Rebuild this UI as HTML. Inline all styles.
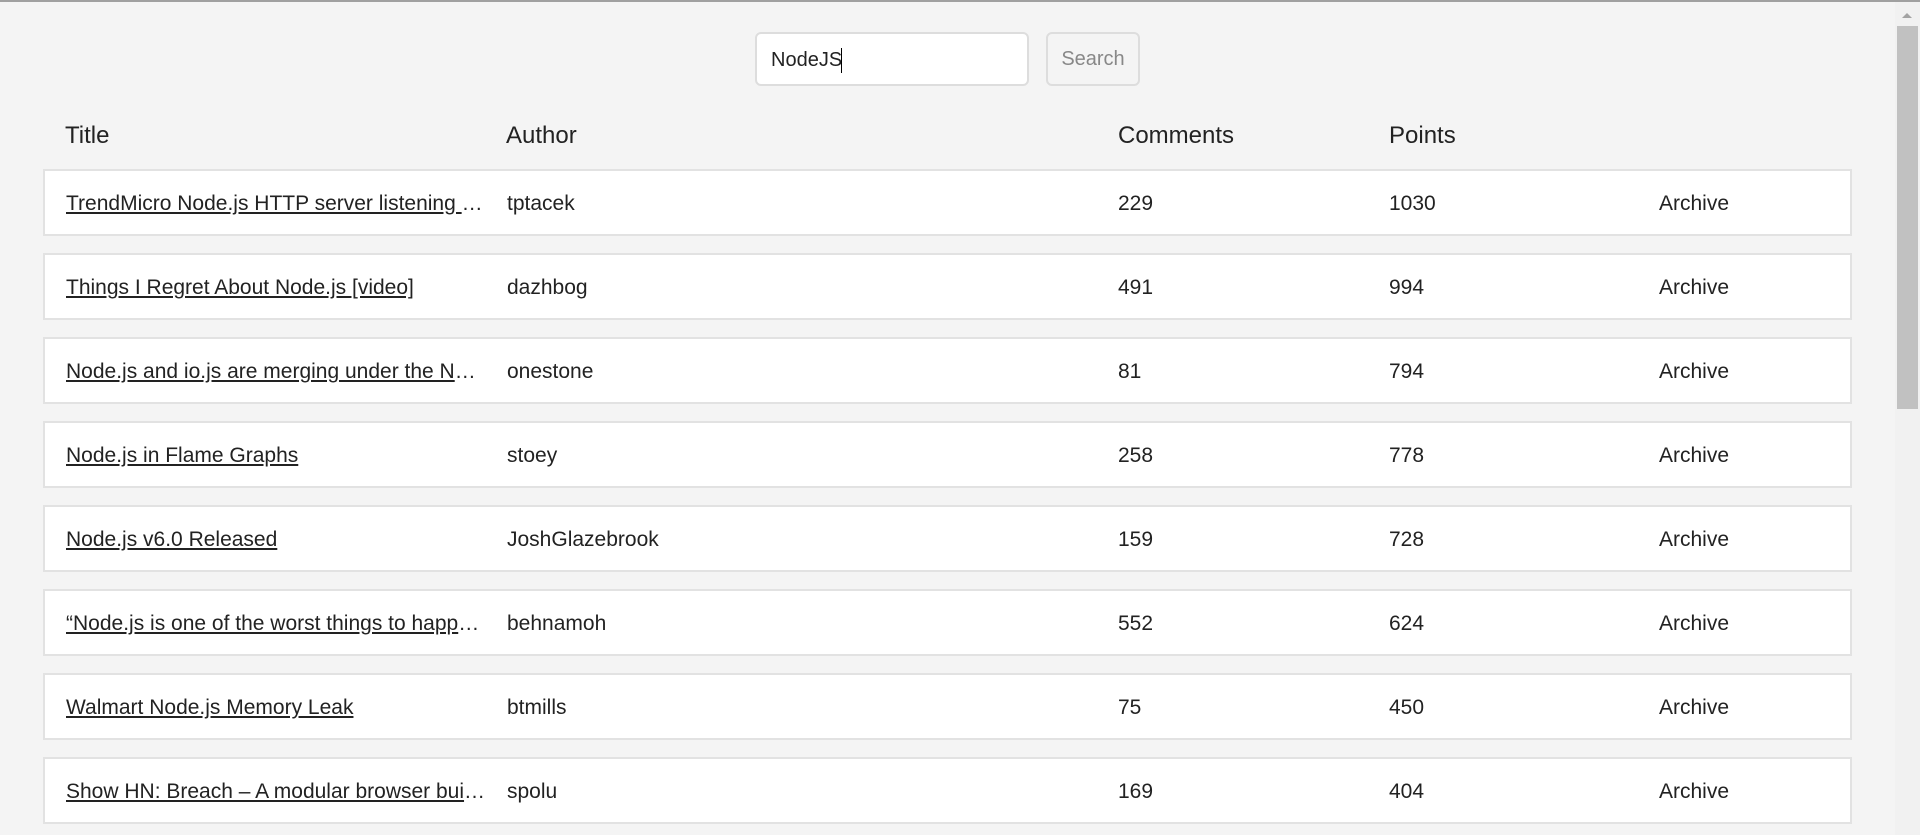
<!DOCTYPE html>
<html><head><meta charset="utf-8"><style>
html,body{margin:0;padding:0;}
body{width:1920px;height:835px;overflow:hidden;background:#f4f4f4;font-family:"Liberation Sans",Arial,sans-serif;color:#222;position:relative;}
.topline{position:absolute;left:0;top:0;width:1920px;height:2px;background:#a0a0a0;}
.input{position:absolute;left:755px;top:32px;background:#fff;border:2px solid #ddd;border-radius:6px;box-sizing:border-box;width:274px;height:54px;}
.input span{position:absolute;left:14px;top:15px;font-size:20px;color:#222;}
.input i{position:absolute;left:84px;top:14px;width:1px;height:25px;background:#000;}
.btn{position:absolute;left:1046px;top:32px;width:94px;height:54px;border:2px solid #ddd;border-radius:6px;box-sizing:border-box;background:#f4f4f4;color:#888;font-size:20px;text-align:center;line-height:50px;}
.hd{position:absolute;top:122px;font-size:24px;color:#222;}
.row{position:absolute;left:43px;width:1809px;height:67px;background:#fff;border:2px solid #e2e2e2;box-sizing:border-box;}
.row div{position:absolute;top:21px;font-size:21px;white-space:nowrap;}
.t{left:21px;width:420px;overflow:hidden;text-overflow:ellipsis;text-decoration:underline;}
.a{left:462px}.c{left:1073px}.p{left:1344px}.r{left:1614px}
.sb{position:absolute;left:1895px;top:2px;width:25px;height:833px;background:#f1f1f1;}
.sb b{position:absolute;left:2px;top:24px;width:21px;height:383px;background:#c1c1c1;}
.sb u{position:absolute;left:7px;top:11px;width:0;height:0;border-left:5px solid transparent;border-right:5px solid transparent;border-bottom:5px solid #a3a3a3;}
</style></head><body>
<div class="topline"></div>
<div class="input"><span>NodeJS</span><i></i></div>
<div class="btn">Search</div>
<div class="hd" style="left:65px">Title</div>
<div class="hd" style="left:506px">Author</div>
<div class="hd" style="left:1118px">Comments</div>
<div class="hd" style="left:1389px">Points</div>

<div class="row" style="top:169px"><div class="t">TrendMicro Node.js HTTP server listening on localhost:49155</div><div class="a">tptacek</div><div class="c">229</div><div class="p">1030</div><div class="r">Archive</div></div>
<div class="row" style="top:253px"><div class="t">Things I Regret About Node.js [video]</div><div class="a">dazhbog</div><div class="c">491</div><div class="p">994</div><div class="r">Archive</div></div>
<div class="row" style="top:337px"><div class="t">Node.js and io.js are merging under the Node Foundation</div><div class="a">onestone</div><div class="c">81</div><div class="p">794</div><div class="r">Archive</div></div>
<div class="row" style="top:421px"><div class="t">Node.js in Flame Graphs</div><div class="a">stoey</div><div class="c">258</div><div class="p">778</div><div class="r">Archive</div></div>
<div class="row" style="top:505px"><div class="t">Node.js v6.0 Released</div><div class="a">JoshGlazebrook</div><div class="c">159</div><div class="p">728</div><div class="r">Archive</div></div>
<div class="row" style="top:589px"><div class="t">“Node.js is one of the worst things to happen to the software industry”</div><div class="a">behnamoh</div><div class="c">552</div><div class="p">624</div><div class="r">Archive</div></div>
<div class="row" style="top:673px"><div class="t">Walmart Node.js Memory Leak</div><div class="a">btmills</div><div class="c">75</div><div class="p">450</div><div class="r">Archive</div></div>
<div class="row" style="top:757px"><div class="t">Show HN: Breach – A modular browser built with Node.js</div><div class="a">spolu</div><div class="c">169</div><div class="p">404</div><div class="r">Archive</div></div>

<div class="sb"><u></u><b></b></div>
</body></html>
